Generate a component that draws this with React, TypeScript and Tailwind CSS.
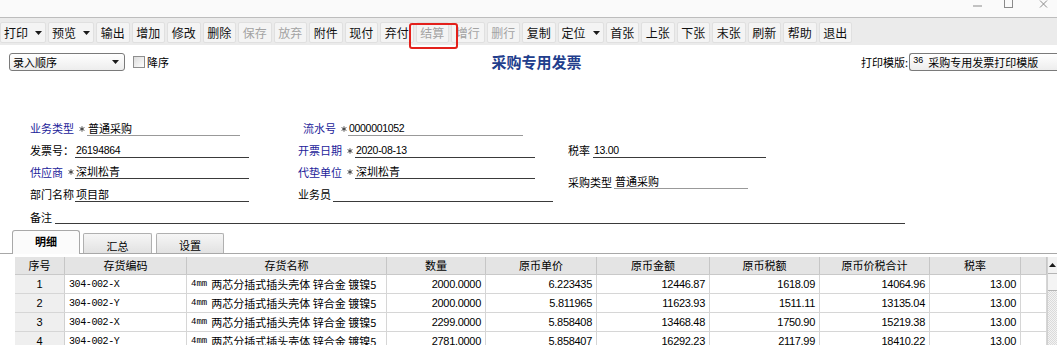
import React from "react";

type Tool = { t: string; dis?: boolean; dd?: boolean };
const tools: Tool[] = [
  { t: "打印", dd: true },
  { t: "预览", dd: true },
  { t: "输出" },
  { t: "增加" },
  { t: "修改" },
  { t: "删除" },
  { t: "保存", dis: true },
  { t: "放弃", dis: true },
  { t: "附件" },
  { t: "现付" },
  { t: "弃付" },
  { t: "结算", dis: true },
  { t: "增行", dis: true },
  { t: "删行", dis: true },
  { t: "复制" },
  { t: "定位", dd: true },
  { t: "首张" },
  { t: "上张" },
  { t: "下张" },
  { t: "末张" },
  { t: "刷新" },
  { t: "帮助" },
  { t: "退出" },
];

function Caret() {
  return (
    <svg width="7" height="4" viewBox="0 0 7 4" className="block">
      <path d="M0 0h7L3.5 4z" fill="#1a1a1a" />
    </svg>
  );
}

function Star() {
  return (
    <svg width="6" height="6" viewBox="0 0 6 6" className="block shrink-0 ml-[5px]">
      <path d="M3 0.3V5.7M0.6 1.6L5.4 4.4M5.4 1.6L0.6 4.4" stroke="#333" strokeWidth="0.9" />
    </svg>
  );
}

function TitleBar() {
  return (
    <div className="h-[18px] bg-[#fafafa] border-b border-[#bdbdbd] flex justify-end items-start">
      <svg width="9" height="2" viewBox="0 0 9 2" className="mt-[5px]">
        <path d="M0 1h9" stroke="#8a8a8a" strokeWidth="1" />
      </svg>
      <svg width="10" height="9" viewBox="0 0 10 9" className="ml-[22px]">
        <rect x="0.5" y="-1" width="8" height="8.5" fill="none" stroke="#8a8a8a" strokeWidth="1" />
      </svg>
      <svg width="9" height="9" viewBox="0 0 9 9" className="ml-[25px] mr-[9px]">
        <path d="M1 0.5L8 7.5M8 0.5L1 7.5" stroke="#8a8a8a" strokeWidth="1" />
      </svg>
    </div>
  );
}

function Toolbar() {
  return (
    <div className="h-[27px] bg-[#ebebeb] flex items-start pt-[4px] gap-[2px]">
      {tools.map((tool) =>
        tool.dd ? (
          <div
            key={tool.t}
            className="h-[21px] w-[46px] shrink-0 flex items-center pl-[3px] bg-[#f4f4f4] border border-[#e0e0e0] rounded-[2px]"
          >
            <span className="text-[12px] leading-[12px] text-[#111]">{tool.t}</span>
            <span className="ml-[7px]">
              <Caret />
            </span>
          </div>
        ) : (
          <div
            key={tool.t}
            className="h-[21px] w-[33.5px] shrink-0 flex items-center justify-center bg-[#f4f4f4] border border-[#e0e0e0] rounded-[2px]"
          >
            <span
              className={
                tool.dis
                  ? "text-[12px] leading-[12px] text-[#a3a3a3]"
                  : "text-[12px] leading-[12px] text-[#111]"
              }
            >
              {tool.t}
            </span>
          </div>
        )
      )}
    </div>
  );
}

function HeaderRow() {
  return (
    <div className="mt-[8px] h-[18px] grid grid-cols-[1fr_auto_1fr] items-center">
      <div className="flex items-center pl-[9px]">
        <div className="w-[116px] h-[18px] border border-[#7a7a7a] rounded-[3px] bg-gradient-to-b from-white to-[#ededed] flex items-center justify-between pl-[3px] pr-[5px]">
          <span className="text-[11px] leading-[12px]">录入顺序</span>
          <Caret />
        </div>
        <div className="ml-[8px] w-[12px] h-[12px] border border-[#8e8e8e] bg-gradient-to-br from-[#dcdcdc] to-white"></div>
        <span className="ml-[2px] text-[11px] leading-[12px]">降序</span>
      </div>
      <div className="pl-[16px] text-[15px] font-bold text-[#213d8c] leading-[18px]">采购专用发票</div>
      <div className="flex items-center justify-end">
        <span className="text-[11px] leading-[12px] mr-[1px] whitespace-nowrap">打印模版:</span>
        <div className="w-[148px] h-[18px] border border-r-0 border-[#7a7a7a] rounded-l-[3px] bg-gradient-to-b from-white to-[#ededed] flex items-center pl-[3px] whitespace-nowrap">
          <span className="text-[9px] tracking-[-0.3px] font-['Liberation_Mono',monospace] mr-[5px]">36</span>
          <span className="text-[11px] leading-[12px]">采购专用发票打印模版</span>
        </div>
      </div>
    </div>
  );
}

type FieldProps = {
  label: string;
  blue?: boolean;
  star?: boolean;
  labelW: string;
  ulW: string;
  value?: string;
  light?: boolean;
  num?: boolean;
};

function Field({ label, blue, star, labelW, ulW, value, light, num }: FieldProps) {
  return (
    <div className="flex items-end whitespace-nowrap">
      <div className={`flex items-center shrink-0 h-[14px] whitespace-nowrap ${labelW}`}>
        <span
          className={
            blue
              ? "shrink-0 whitespace-nowrap text-[11px] leading-[13px] text-[#22229a]"
              : "shrink-0 whitespace-nowrap text-[11px] leading-[13px] text-black"
          }
        >
          {label}
        </span>
        {star && <Star />}
      </div>
      <div
        className={`shrink-0 h-[14px] flex items-center border-b ${light ? "border-[#999999]" : "border-[#3a3a3a]"} ${ulW} pl-[1px] whitespace-nowrap`}
      >
        <span
          className={
            num
              ? "text-[10.5px] leading-[13px] tracking-[-0.3px] font-['Liberation_Sans',sans-serif]"
              : "text-[11px] leading-[13px]"
          }
        >
          {value}
        </span>
      </div>
    </div>
  );
}

function Form() {
  return (
    <>
      <div className="mt-[46px] ml-[30px] grid grid-cols-[268px_270px_1fr] grid-rows-[23px_21px_22px_23px]">
        <div className="flex items-center">
          <Field label="业务类型" blue star labelW="w-[57px]" ulW="w-[153px]" value="普通采购" light />
        </div>
        <div className="flex items-center pl-[5px]">
          <Field label="流水号" blue star labelW="w-[45px]" ulW="w-[175px]" value="0000001052" light num />
        </div>
        <div></div>

        <div className="flex items-center">
          <Field label="发票号：" labelW="w-[45px]" ulW="w-[174px]" value="26194864" num />
        </div>
        <div className="flex items-center">
          <Field label="开票日期" blue star labelW="w-[57px]" ulW="w-[180px]" value="2020-08-13" num />
        </div>
        <div className="flex items-center">
          <Field label="税率" labelW="w-[25px]" ulW="w-[173px]" value="13.00" num />
        </div>

        <div className="flex items-center">
          <Field label="供应商" blue star labelW="w-[45px]" ulW="w-[174px]" value="深圳松青" />
        </div>
        <div className="flex items-center">
          <Field label="代垫单位" blue star labelW="w-[57px]" ulW="w-[180px]" value="深圳松青" />
        </div>
        <div className="row-span-2 flex items-center pb-[3px]">
          <Field label="采购类型" labelW="w-[46px]" ulW="w-[134px]" value="普通采购" light />
        </div>

        <div className="flex items-center">
          <Field label="部门名称" labelW="w-[45px]" ulW="w-[174px]" value="项目部" />
        </div>
        <div className="flex items-center">
          <Field label="业务员" labelW="w-[35px]" ulW="w-[220px]" value="" />
        </div>
      </div>
      <div className="ml-[30px] h-[22px] flex items-center">
        <Field label="备注" labelW="w-[25px]" ulW="w-[850px]" value="" />
      </div>
    </>
  );
}

function Tabs() {
  return (
    <div className="mt-[3px] h-[23px] flex items-end pl-[12px] border-b border-[#a8a8a8]">
      <div className="relative -mb-px h-[24px] w-[68px] bg-[#fbfbfb] border border-b-0 border-[#a8a8a8] rounded-t-[3px] flex justify-center pt-[4px]">
        <span className="text-[11px] leading-[13px] font-bold">明细</span>
      </div>
      <div className="ml-[3px] h-[20px] w-[69px] bg-gradient-to-b from-[#f6f6f6] to-[#e2e2e2] border border-b-0 border-[#b0b0b0] rounded-t-[2px] flex justify-center pt-[6px]">
        <span className="text-[11px] leading-[13px]">汇总</span>
      </div>
      <div className="ml-[4px] h-[20px] w-[68px] bg-gradient-to-b from-[#f6f6f6] to-[#e2e2e2] border border-b-0 border-[#b0b0b0] rounded-t-[2px] flex justify-center pt-[5px]">
        <span className="text-[11px] leading-[13px]">设置</span>
      </div>
    </div>
  );
}

const colW = [
  "w-[50px]",
  "w-[122px]",
  "w-[200px]",
  "w-[99px]",
  "w-[111px]",
  "w-[113px]",
  "w-[110px]",
  "w-[110px]",
  "w-[91px]",
  "w-[26px]",
];
const heads = ["序号", "存货编码", "存货名称", "数量", "原币单价", "原币金额", "原币税额", "原币价税合计", "税率", ""];

const rows = [
  ["1", "304-002-X", "2000.0000", "6.223435", "12446.87", "1618.09", "14064.96", "13.00"],
  ["2", "304-002-Y", "2000.0000", "5.811965", "11623.93", "1511.11", "13135.04", "13.00"],
  ["3", "304-002-X", "2299.0000", "5.858408", "13468.48", "1750.90", "15219.38", "13.00"],
  ["4", "304-002-Y", "2781.0000", "5.858407", "16292.23", "2117.99", "18410.22", "13.00"],
];

const NUM = "text-[11px] leading-[13px] tracking-[-0.3px] font-['Liberation_Sans',sans-serif]";

function Grid() {
  return (
    <div className="mt-[3px] ml-[15px] flex">
      <div className="w-[1032px] shrink-0">
        <div className="flex h-[18px] bg-[#e4e4e4] border-b border-[#c9c9c9]">
          {heads.map((h, i) => (
            <div key={i} className={`${colW[i]} shrink-0 border-r border-[#c6c6c6] flex items-center justify-center`}>
              <span className="text-[11px] leading-[13px]">{h}</span>
            </div>
          ))}
        </div>
        {rows.map((r) => (
          <div key={r[0]} className="flex h-[19px] border-b border-[#d6d6d6]">
            <div className={`${colW[0]} shrink-0 bg-[#efefef] border-r border-[#d0d0d0] flex items-center justify-center`}>
              <span className={NUM}>{r[0]}</span>
            </div>
            <div className={`${colW[1]} shrink-0 border-r border-[#d6d6d6] flex items-center pl-[4px]`}>
              <span className="text-[10px] leading-[13px] tracking-[-0.4px] font-['Liberation_Mono',monospace]">{r[1]}</span>
            </div>
            <div className={`${colW[2]} shrink-0 border-r border-[#d6d6d6] flex items-center pl-[4px] whitespace-nowrap overflow-hidden`}>
              <span className="text-[9px] leading-[13px] font-['Liberation_Mono',monospace] mr-[4px]">4mm</span>
              <span className="text-[11px] leading-[13px]">两芯分插式插头壳体 锌合金 镀镍5</span>
            </div>
            {r.slice(2).map((v, j) => (
              <div key={j} className={`${colW[j + 3]} shrink-0 border-r border-[#d6d6d6] flex items-center justify-end pr-[4px]`}>
                <span className={NUM}>{v}</span>
              </div>
            ))}
            <div className={`${colW[9]} shrink-0 border-r border-[#d6d6d6]`}></div>
          </div>
        ))}
      </div>
      <div className="w-[10px] shrink-0 flex flex-col border-l border-[#d0d0d0] bg-[repeating-conic-gradient(#dadada_0_25%,#f3f3f3_0_50%)] bg-[length:2px_2px] h-[90px]">
        <div className="h-[16px] bg-[#f2f2f2] flex items-center justify-center">
          <svg width="7" height="4" viewBox="0 0 7 4">
            <path d="M0 4h7L3.5 0z" fill="#1a1a1a" />
          </svg>
        </div>
        <div className="h-[18px] bg-[#f4f4f4] border-y border-[#b5b5b5]"></div>
      </div>
    </div>
  );
}

export default function App() {
  return (
    <div className="relative w-[1057px] h-[345px] overflow-hidden bg-white text-black font-['Noto_Sans_CJK_SC',sans-serif]">
      <TitleBar />
      <Toolbar />
      <HeaderRow />
      <Form />
      <Tabs />
      <Grid />
      <div className="absolute left-[409px] top-[23px] w-[49px] h-[26px] border-2 border-[#e3201b] rounded-[3px]"></div>
    </div>
  );
}
